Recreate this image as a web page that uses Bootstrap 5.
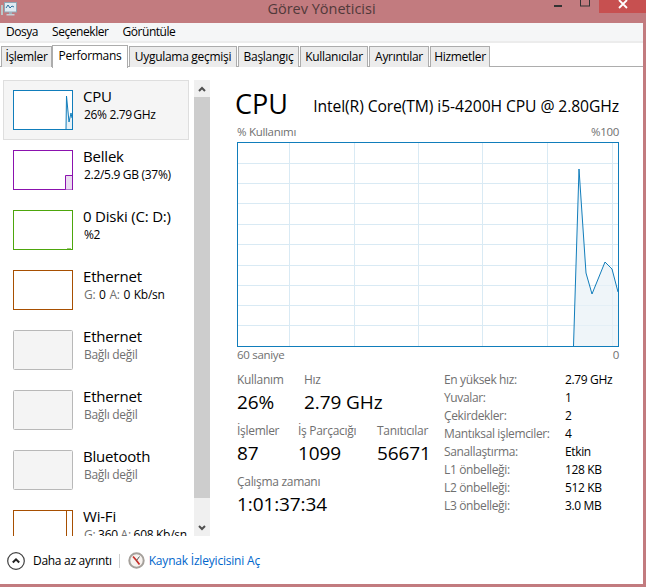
<!DOCTYPE html>
<html lang="tr"><head><meta charset="utf-8"><title>Görev Yöneticisi</title>
<link href="https://cdn.jsdelivr.net/npm/bootstrap@5.3.0/dist/css/bootstrap.min.css" rel="stylesheet">
<style>
html,body{margin:0;height:587px;overflow:hidden}
body{background:#c27b7f;font-family:"Open Sans","Noto Sans",sans-serif;font-size:12px;line-height:16px;color:#000;letter-spacing:-.3px}
.wnd{height:587px;width:646px}
.tbar{height:23px;flex:none}
.tbar-title{flex:1;text-align:center;font-size:14.5px;line-height:16px;color:#51393a;letter-spacing:0;padding:1px 0 0 72px}
.tb-ico{width:16px;height:16px;margin:1px 0 0 1px}
.ctrls{width:92px;height:14px}
.cls{width:47px;height:13px;background:#c75050;margin-left:auto;color:#fff}
.shell{flex:1;margin:0 3px 3px 0;background:#fff;min-height:0}
.mbar{height:18px;background:#f5f6f7;padding-left:6px;gap:14px;font-size:12px;line-height:18px;flex:none;letter-spacing:-.45px}
.mbar-sep{height:2px;background:#ececec;flex:none}
.tabsw{height:24px;padding:2px 0 0 1px;flex:none;border-bottom:1px solid #adadad}
.nav-tabs.tabz{border:0;gap:0;flex-wrap:nowrap;align-items:flex-end;width:100%}
.tabz .nav-link{height:21px;margin:0 1px 0 0;padding:0;border:1px solid #acacac;border-bottom:0;border-radius:0;background:#ececec;color:#000;text-align:center;line-height:20px;font-size:12px}
.tabz .nav-link.active{height:23px;margin:0 1px -1px -1px;background:#fff;color:#000;border-color:#acacac;line-height:19px}
.bodyw{flex:1;min-height:0}
.side{width:213px;flex:none;padding-top:13px;height:469px}
.slist{width:194px;padding-left:3px;overflow:hidden;flex:none}
.sitem{height:60px;width:186px;gap:10px;padding:9px 0 0 9px;border:1px solid transparent}
.sitem.sel{background:#f5f5f5;border-color:#dedede}
.sitem svg{width:60px;height:40px;flex:none;display:block}
.sname{font-size:15px;line-height:18px;margin-top:-3px;color:#000;letter-spacing:-.2px}
.ssub{font-size:12px;line-height:16px;color:#000;white-space:nowrap;margin:2px 0 0 1px;letter-spacing:-.3px}
.sitem.sel .ssub{word-spacing:-1.5px}
.ssub.wide{word-spacing:1px}
.gry{color:#707070}
.sbar{width:16px;background:#f0f0f0;flex:none;height:456px}
.sbar-a{height:17px;flex:none}
.sbar-t{height:401px;background:#cdcdcd;flex:none}
.main{flex:1;padding:0 24px;min-width:0}
.hd{height:56px;margin-left:-2px;padding-top:19px;flex:none}
.hd-a{font-size:27px;line-height:36px;letter-spacing:0}
.hd-b{font-size:15.7px;line-height:20px;letter-spacing:-.1px;margin-top:10px}
.cap{height:16px;color:#707070;font-size:11.5px;line-height:16px;margin-top:1px}
.cap-t{margin-bottom:2px}
.gsvg{display:block;width:382px;height:205px}
.stats{margin-top:9px;height:165px}
.lft{width:207px;flex:none}
.lab{font-size:12px;line-height:16px;color:#707070;white-space:nowrap}
.val{font-size:19px;line-height:28px;color:#000;white-space:nowrap;letter-spacing:-.1px}
.srow{height:51px}
.c1{width:67px}.c2{width:79px}
.c1b{width:61px}
.dt{display:grid;grid-template-columns:121px auto;row-gap:0;font-size:12px;line-height:18px;align-content:start;margin-top:-1px;letter-spacing:-.36px}
.dt span:nth-child(odd){color:#707070;white-space:nowrap}
.foot{height:47px;padding-left:7px;flex:none}
.fcirc{width:18px;height:18px;flex:none;display:block}
.fsep{width:1px;height:14px;background:#d0d0d0;margin:0 8px 0 7px}
.flink{color:#0066cc;text-decoration:none;margin-left:4px;letter-spacing:-.2px}
.fcomp{width:17px;height:17px;display:block;flex:none}
</style></head>
<body>
<div class="wnd d-flex flex-column">
 <div class="tbar d-flex align-items-start">
  <svg class="tb-ico" viewBox="0 0 16 16"><rect x="3.5" y="1.5" width="12" height="9.5" fill="#dfeaf2" stroke="#8fa6b4"/><path d="M5 7l2-3 2 3 2-2 2 1" fill="none" stroke="#2b6f9e"/><rect x="8" y="11" width="3" height="2" fill="#9fb0ba"/><rect x="5.500" y="13" width="8" height="1.500" fill="#c4cfd6"/><rect x="0" y="4" width="2" height="10" fill="#b9c9c9"/></svg>
  <div class="tbar-title">Görev Yöneticisi</div>
  <div class="ctrls d-flex position-relative">
   <svg width="44" height="14" viewBox="0 0 44 14"><rect x="0" y="5" width="8" height="2" fill="#333"/><rect x="26.500" y="-2" width="9" height="8" fill="none" stroke="#333"/></svg>
   <div class="cls d-flex justify-content-center"><svg width="10" height="9" viewBox="0 0 10 9"><path d="M1 0l8 8M9 0L1 8" stroke="#fff" stroke-width="1.800"/></svg></div>
  </div>
 </div>
 <div class="shell d-flex flex-column">
  <div class="mbar d-flex"><span>Dosya</span><span>Seçenekler</span><span>Görüntüle</span></div>
  <div class="mbar-sep"></div>
  <div class="tabsw">
   <ul class="nav nav-tabs tabz">
    <li class="nav-item"><a class="nav-link" style="width:51px">İşlemler</a></li>
    <li class="nav-item"><a class="nav-link active" style="width:76px">Performans</a></li>
    <li class="nav-item"><a class="nav-link" style="width:108px">Uygulama geçmişi</a></li>
    <li class="nav-item"><a class="nav-link" style="width:61px">Başlangıç</a></li>
    <li class="nav-item"><a class="nav-link" style="width:68px">Kullanıcılar</a></li>
    <li class="nav-item"><a class="nav-link" style="width:60px">Ayrıntılar</a></li>
    <li class="nav-item"><a class="nav-link" style="width:60px">Hizmetler</a></li>
   </ul>
  </div>
  <div class="bodyw d-flex">
   <div class="side d-flex">
    <div class="slist">
     <div class="sitem sel d-flex">
      <svg viewBox="0 0 60 40"><rect x=".5" y=".5" width="59" height="39" fill="#fff" stroke="#117dbb"/><path d="M53 39L53.500 6 56 32 58 23 59 28V39Z" fill="#e8f1f7"/><path d="M53 39L53.500 6 56 32 58 23 59 28" fill="none" stroke="#117dbb"/></svg>
      <div><div class="sname">CPU</div><div class="ssub">26%&nbsp; 2.79 GHz</div></div>
     </div>
     <div class="sitem d-flex">
      <svg viewBox="0 0 60 40"><rect x=".5" y=".5" width="59" height="39" fill="#fff" stroke="#8b12ae"/><path d="M52.500 39.500V25.500H59V39.500Z" fill="#eadcf0"/><path d="M52.500 39.500V25.500H59" fill="none" stroke="#8b12ae"/></svg>
      <div><div class="sname">Bellek</div><div class="ssub">2.2/5.9 GB (37%)</div></div>
     </div>
     <div class="sitem d-flex">
      <svg viewBox="0 0 60 40"><rect x=".5" y=".5" width="59" height="39" fill="#fff" stroke="#4da60c"/><path d="M54 38.500h4" stroke="#9ecb7c"/></svg>
      <div><div class="sname">0 Diski (C: D:)</div><div class="ssub">%2</div></div>
     </div>
     <div class="sitem d-flex">
      <svg viewBox="0 0 60 40"><rect x=".5" y=".5" width="59" height="39" fill="#fff" stroke="#a74f01"/></svg>
      <div><div class="sname">Ethernet</div><div class="ssub wide"><span class="gry">G:</span> 0 <span class="gry">A:</span> 0 Kb/sn</div></div>
     </div>
     <div class="sitem d-flex">
      <svg viewBox="0 0 60 40"><rect x=".5" y=".5" width="59" height="39" rx="1" fill="#f4f4f4" stroke="#b8b8b8"/></svg>
      <div><div class="sname">Ethernet</div><div class="ssub gry">Bağlı değil</div></div>
     </div>
     <div class="sitem d-flex">
      <svg viewBox="0 0 60 40"><rect x=".5" y=".5" width="59" height="39" rx="1" fill="#f4f4f4" stroke="#b8b8b8"/></svg>
      <div><div class="sname">Ethernet</div><div class="ssub gry">Bağlı değil</div></div>
     </div>
     <div class="sitem d-flex">
      <svg viewBox="0 0 60 40"><rect x=".5" y=".5" width="59" height="39" rx="1" fill="#f4f4f4" stroke="#b8b8b8"/></svg>
      <div><div class="sname">Bluetooth</div><div class="ssub gry">Bağlı değil</div></div>
     </div>
     <div class="sitem d-flex">
      <svg viewBox="0 0 60 40"><rect x=".5" y=".5" width="59" height="39" fill="#fff" stroke="#a74f01"/><path d="M53.500 0V40" stroke="#a74f01"/></svg>
      <div><div class="sname">Wi-Fi</div><div class="ssub"><span class="gry">G:</span> 360 <span class="gry">A:</span> 608 Kb/sn</div></div>
     </div>
    </div>
    <div class="sbar d-flex flex-column">
     <div class="sbar-a d-flex align-items-center justify-content-center"><svg width="8" height="6" viewBox="0 0 8 6"><path d="M1 5l3-3 3 3" fill="none" stroke="#505050" stroke-width="2"/></svg></div>
     <div class="sbar-t"></div>
     <div class="flex-grow-1"></div>
     <div class="sbar-a d-flex align-items-center justify-content-center"><svg width="8" height="6" viewBox="0 0 8 6"><path d="M1 1l3 3 3-3" fill="none" stroke="#505050" stroke-width="2"/></svg></div>
    </div>
   </div>
   <div class="main d-flex flex-column">
    <div class="hd d-flex justify-content-between"><span class="hd-a">CPU</span><span class="hd-b">Intel(R) Core(TM) i5-4200H CPU @ 2.80GHz</span></div>
    <div class="cap cap-t d-flex justify-content-between"><span>% Kullanımı</span><span>%100</span></div>
    <svg class="gsvg" viewBox="0 0 382 205">
     <g stroke="#d9eaf4" stroke-width="1">
      <path d="M1 21.500H381M1 41.500H381M1 61.500H381M1 82.500H381M1 102.500H381M1 123.500H381M1 143.500H381M1 163.500H381M1 183.500H381"/>
      <path d="M52.500 1V204M117.500 1V204M181.500 1V204M245.500 1V204M310.500 1V204M375.500 1V204"/>
     </g>
     <path d="M336.500 204L342 27 349 131 355 152 368 120 375 127 381 150V204Z" fill="#e8f1f7" fill-opacity=".7"/>
     <path d="M336.500 204L342 27 349 131 355 152 368 120 375 127 381 150" fill="none" stroke="#117dbb" stroke-width="1"/>
     <rect x=".5" y=".5" width="381" height="204" fill="none" stroke="#117dbb"/>
    </svg>
    <div class="cap d-flex justify-content-between mt-0"><span>60 saniye</span><span>0</span></div>
    <div class="stats d-flex">
     <div class="lft">
      <div class="srow d-flex"><div class="c1"><div class="lab">Kullanım</div><div class="val">26%</div></div><div><div class="lab">Hız</div><div class="val">2.79 GHz</div></div></div>
      <div class="srow d-flex"><div class="c1b"><div class="lab">İşlemler</div><div class="val">87</div></div><div class="c2"><div class="lab">İş Parçacığı</div><div class="val">1099</div></div><div><div class="lab">Tanıtıcılar</div><div class="val">56671</div></div></div>
      <div class="srow"><div class="lab">Çalışma zamanı</div><div class="val">1:01:37:34</div></div>
     </div>
     <div class="dt flex-grow-1">
      <span>En yüksek hız:</span><span>2.79 GHz</span>
      <span>Yuvalar:</span><span>1</span>
      <span>Çekirdekler:</span><span>2</span>
      <span>Mantıksal işlemciler:</span><span>4</span>
      <span>Sanallaştırma:</span><span>Etkin</span>
      <span>L1 önbelleği:</span><span>128 KB</span>
      <span>L2 önbelleği:</span><span>512 KB</span>
      <span>L3 önbelleği:</span><span>3.0 MB</span>
     </div>
    </div>
   </div>
  </div>
  <div class="foot d-flex align-items-center">
   <svg class="fcirc" viewBox="0 0 18 18"><circle cx="9" cy="9" r="8.300" fill="#fff" stroke="#404040" stroke-width="1.200"/><path d="M5.800 10.500L9 7.300l3.200 3.200" fill="none" stroke="#222" stroke-width="2"/></svg>
   <span class="ms-2">Daha az ayrıntı</span>
   <span class="fsep"></span>
   <svg class="fcomp" viewBox="0 0 17 17"><circle cx="8.500" cy="8.500" r="7.200" fill="#f7f3f0" stroke="#a5a09b" stroke-width="2"/><path d="M5 4.500l3.500 4 3 4" stroke="#c8302a" stroke-width="1.800"/><path d="M8.500 8.500l3-4" stroke="#555" stroke-width="1"/></svg>
   <a class="flink" href="#">Kaynak İzleyicisini Aç</a>
  </div>
 </div>
</div>
</body></html>
